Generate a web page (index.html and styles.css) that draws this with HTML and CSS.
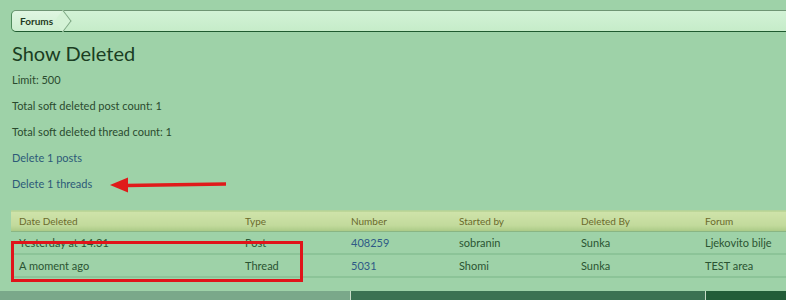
FILE: index.html
```html
<!DOCTYPE html>
<html>
<head>
<meta charset="utf-8">
<link rel="stylesheet" href="styles.css">
</head>
<body>
<div class="page">
  <div class="breadcrumb">
    <a class="crumb">Forums</a>
  </div>
  <h1 class="title">Show Deleted</h1>
  <p class="line">Limit: 500</p>
  <p class="line">Total soft deleted post count: 1</p>
  <p class="line">Total soft deleted thread count: 1</p>
  <p class="line"><a class="link">Delete 1 posts</a></p>
  <p class="line arrow-line"><a class="link">Delete 1 threads</a>
    <svg class="arrow" width="118" height="16" viewBox="0 0 118 16"><path d="M16 8.5 L116 7" stroke="#e01a1a" stroke-width="3.5" fill="none"/><path d="M0 8 L18 0.5 L18 15.5 Z" fill="#e01a1a"/></svg>
  </p>
  <div class="table-wrap">
    <table class="data">
      <thead>
        <tr><th class="c1">Date Deleted</th><th class="c2">Type</th><th class="c3">Number</th><th class="c4">Started by</th><th class="c5">Deleted By</th><th class="c6">Forum</th></tr>
      </thead>
      <tbody>
        <tr><td>Yesterday at 14:31</td><td>Post</td><td class="num">408259</td><td>sobranin</td><td>Sunka</td><td>Ljekovito bilje</td></tr>
        <tr><td>A moment ago</td><td>Thread</td><td class="num">5031</td><td>Shomi</td><td>Sunka</td><td>TEST area</td></tr>
      </tbody>
    </table>
    <div class="highlight"></div>
  </div>
</div>
<div class="footer">
  <div class="f1"></div>
  <div class="f2"></div>
  <div class="f3"></div>
</div>
</body>
</html>
```
FILE: styles.css
```css
html, body {
  margin: 0;
  padding: 0;
  background: #9ed2a8;
  overflow: hidden;
  height: 300px;
}
body {
  font-family: Lato, "DejaVu Sans", sans-serif;
  font-size: 11px;
  color: #2a4a2e;
}
.page {
  padding: 10px 0 0 11px;
}
.breadcrumb {
  height: 20px;
  border-top: 1px solid #6f9574;
  border-bottom: 1px solid #1f5a30;
  border-left: 1px solid #4f8a5c;
  border-radius: 5px 0 0 5px;
  background: linear-gradient(#d2f2d6, #c6ecc9);
  display: flex;
  align-items: center;
}
.crumb {
  position: relative;
  height: 20px;
  line-height: 20px;
  padding: 0 10px 0 8px;
  font-weight: bold;
  font-size: 10px;
  color: #1f3a22;
  background: linear-gradient(#e0f6e2, #cdeed0);
  border-radius: 5px 0 0 5px;
}
.crumb::after {
  content: "";
  position: absolute;
  right: -7px;
  top: 3px;
  width: 13px;
  height: 13px;
  border-top: 1px solid #7ea884;
  border-right: 1px solid #7ea884;
  transform: rotate(45deg) skew(8deg, 8deg);
  background: #d4f2d6;
}
.title {
  margin: 8px 0 0 1px;
  font-family: Lato, "DejaVu Sans", sans-serif;
  font-weight: normal;
  font-size: 20px;
  line-height: 26px;
  color: #1a3d22;
  height: 32px;
}
.line {
  margin: 0 0 0 1px;
  height: 26px;
  line-height: 16px;
  font-size: 11px;
  color: #2a4a2e;
}
.link { color: #2d5a78; }
.arrow-line {
  display: flex;
  align-items: flex-start;
}
.arrow {
  margin-left: 18px;
  margin-top: 1px;
}
.table-wrap {
  position: relative;
  margin-top: 8px;
}
.data {
  border-collapse: collapse;
  width: 800px;
  font-size: 11px;
}
.data th {
  text-align: left;
  font-weight: normal;
  font-size: 10px;
  color: #6b6a2c;
  height: 20px;
  padding: 0 0 0 8px;
  background: linear-gradient(#cfe3aa, #c2da9c 70%, #a9c985);
  border-top: 1px solid #b3d39a;
  border-bottom: 1px solid #8ab684;
}
.data td {
  height: 21px;
  padding: 0 0 0 8px;
  color: #2b5432;
  border-bottom: 2px solid #8cc498;
}
.data .num { color: #2f5a86; }
.c1 { width: 218px; }
.c2 { width: 98px; }
.c3 { width: 100px; }
.c4 { width: 114px; }
.c5 { width: 116px; }
.highlight {
  position: absolute;
  left: 0;
  top: 31px;
  width: 286px;
  height: 35px;
  border: 3px solid #e0141a;
}
.footer {
  position: absolute;
  top: 291px;
  left: 0;
  width: 786px;
  height: 9px;
  display: flex;
}
.f1 { width: 350px; background: #7aa88a; border-right: 1px solid #c8dcc8; }
.f2 { width: 354px; background: #3b7252; border-right: 1px solid #c8dcc8; }
.f3 { flex: 1; background: #225d38; }
```
